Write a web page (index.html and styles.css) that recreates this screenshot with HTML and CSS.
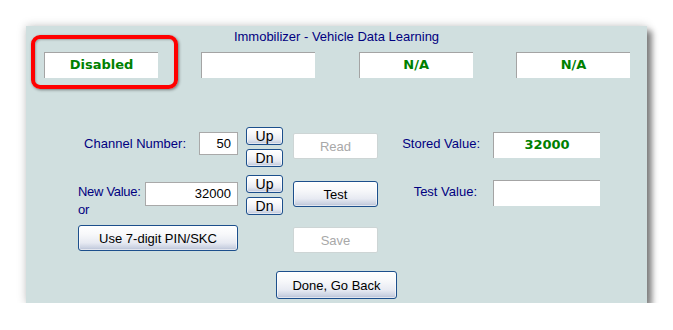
FILE: index.html
```html
<!DOCTYPE html>
<html>
<head>
<meta charset="utf-8">
<link rel="stylesheet" href="styles.css">
</head>
<body>
<div class="panel">
  <div class="title">Immobilizer - Vehicle Data Learning</div>
  <div class="status-row">
    <div class="box value">Disabled</div>
    <div class="box value"></div>
    <div class="box value">N/A</div>
    <div class="box value">N/A</div>
  </div>
  <div class="highlight"></div>

  <div class="form">
    <!-- row A -->
    <div class="cell c1 row-a">
      <span class="label ch-label">Channel Number:</span>
      <div class="entry ch-entry">50</div>
    </div>
    <div class="cell updn">
      <button class="btn small">Up</button>
      <button class="btn small">Dn</button>
    </div>
    <div class="cell"><button class="btn off act-a">Read</button></div>
    <div class="cell lab"><span class="label stored-label">Stored Value:</span></div>
    <div class="cell"><div class="box value side">32000</div></div>

    <!-- row B -->
    <div class="cell c1 row-b">
      <span class="label nv-label">New Value:<br>or</span>
      <div class="entry nv-entry">32000</div>
    </div>
    <div class="cell updn">
      <button class="btn small">Up</button>
      <button class="btn small">Dn</button>
    </div>
    <div class="cell"><button class="btn act act-a">Test</button></div>
    <div class="cell lab"><span class="label test-label">Test Value:</span></div>
    <div class="cell"><div class="box value side"></div></div>

    <!-- row C -->
    <div class="cell c1"><button class="btn pin">Use 7-digit PIN/SKC</button></div>
    <div class="cell"></div>
    <div class="cell"><button class="btn off act-c">Save</button></div>
    <div class="cell"></div>
    <div class="cell"></div>
  </div>

  <div class="footer">
    <button class="btn done">Done, Go Back</button>
  </div>
</div>
</body>
</html>
```

FILE: styles.css
```css
html, body {
  margin: 0;
  padding: 0;
  background: #ffffff;
}

body {
  font-family: "Liberation Sans", Arial, sans-serif;
  font-size: 13px;
}

.panel {
  position: relative;
  box-sizing: border-box;
  margin: 26px 0 0 26px;
  width: 621px;
  height: 277px;
  background: #d0dfdf;
  box-shadow: 5px 5px 6px rgba(0, 0, 0, 0.45), 0 0 9px rgba(0, 0, 0, 0.22);
  padding-top: 3px;
}

.title {
  text-align: center;
  color: #000080;
  line-height: 16px;
  height: 16px;
}

.status-row {
  display: flex;
  justify-content: space-between;
  margin-top: 7px;
  padding: 0 17px 0 18px;
}

.box {
  box-sizing: border-box;
  width: 114px;
  height: 26px;
  background: #ffffff;
  border-top: 1px solid #a4a4a4;
  border-left: 1px solid #a4a4a4;
}

.value {
  font-family: "DejaVu Sans", sans-serif;
  font-weight: bold;
  font-size: 13px;
  color: #008000;
  text-align: center;
  line-height: 24px;
}

.box.side {
  width: 107px;
  margin-top: 5px;
}

.highlight {
  position: absolute;
  left: 5px;
  top: 9px;
  width: 147px;
  height: 54px;
  box-sizing: border-box;
  border: 4px solid #ff0000;
  border-radius: 9px;
  box-shadow: 1px 1px 3px rgba(0, 0, 0, 0.45), inset 1px 1px 2px rgba(0, 0, 0, 0.25);
}

.form {
  display: grid;
  grid-template-columns: 168px 47px 85px 115px 107px;
  grid-template-rows: 48px 50px 28px;
  margin-top: 49px;
  padding-left: 52px;
  align-items: start;
}

.cell {
  display: flex;
  align-items: flex-start;
}

.c1 {
  justify-content: flex-end;
  padding-right: 8px;
}

.c1.row-b {
  justify-content: space-between;
}

.label {
  color: #000080;
  line-height: 16px;
  margin-top: 9px;
}

.ch-label {
  margin-right: 13px;
}

.nv-label {
  line-height: 18px;
  margin-top: 8px;
  letter-spacing: -0.3px;
}

.lab {
  justify-content: flex-end;
}

.stored-label {
  margin-right: 13px;
}

.test-label {
  margin-right: 16px;
}

.entry {
  box-sizing: border-box;
  background: #ffffff;
  border: 1px solid #a9a9a9;
  color: #000000;
  text-align: right;
  padding-right: 6px;
}

.ch-entry {
  width: 39px;
  height: 23px;
  line-height: 21px;
  margin-top: 5px;
}

.nv-entry {
  width: 93px;
  height: 24px;
  line-height: 22px;
  margin-top: 7px;
}

.updn {
  flex-direction: column;
  gap: 4px;
}

.btn {
  box-sizing: border-box;
  font-family: "Liberation Sans", Arial, sans-serif;
  font-size: 13px;
  color: #000000;
  padding: 0;
  margin: 0;
  border: 1px solid #1c4f8c;
  border-radius: 3px;
  background: linear-gradient(to bottom, #ffffff 0%, #f7f8fa 35%, #e7eaf2 70%, #cbd2e2 90%, #b4bdd3 100%);
  box-shadow: inset 0 0 0 1px rgba(255, 255, 255, 0.6);
  text-align: center;
}

.btn.small {
  width: 37px;
  height: 18px;
  line-height: 14px;
  font-size: 14px;
}

.btn.act, .btn.off {
  width: 85px;
  height: 26px;
}

.act-a {
  margin-top: 6px;
}

.act-c {
  margin-top: 2px;
}

.btn.off {
  background: #ffffff;
  border: 1px solid #cdd5d5;
  border-radius: 2px;
  box-shadow: none;
  color: #a8a8a8;
}

.btn.pin {
  width: 160px;
  height: 26px;
}

.footer {
  display: flex;
  justify-content: center;
  margin-top: 18px;
}

.btn.done {
  width: 121px;
  height: 28px;
}
```
